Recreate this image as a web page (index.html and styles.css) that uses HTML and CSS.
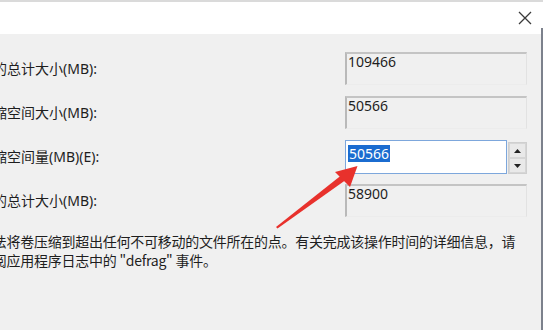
FILE: index.html
```html
<!DOCTYPE html>
<html lang="zh-CN">
<head>
<meta charset="utf-8">
<link rel="stylesheet" href="styles.css">
</head>
<body>
<div class="win">
  <div class="titlebar">
    <svg class="close" width="14" height="14" viewBox="0 0 14 14"><path d="M1 1 L13 13 M13 1 L1 13" stroke="#3a3a3a" stroke-width="1.3" fill="none"/></svg>
  </div>
  <div class="content">
    <div class="row">
      <span class="label">压缩前的总计大小(MB):</span>
      <div class="field"><span class="val">109466</span></div>
    </div>
    <div class="row">
      <span class="label">可用压缩空间大小(MB):</span>
      <div class="field"><span class="val">50566</span></div>
    </div>
    <div class="row">
      <span class="label">输入压缩空间量(MB)(E):</span>
      <div class="spin">
        <div class="edit"><span class="sel">50566</span></div>
        <div class="updown">
          <div class="btn"><svg width="7" height="4" viewBox="0 0 7 4"><path d="M0 4 L3.5 0 L7 4 Z" fill="#222"/></svg></div>
          <div class="btn"><svg width="7" height="4" viewBox="0 0 7 4"><path d="M0 0 L7 0 L3.5 4 Z" fill="#222"/></svg></div>
        </div>
      </div>
    </div>
    <div class="row">
      <span class="label">压缩后的总计大小(MB):</span>
      <div class="field"><span class="val">58900</span></div>
    </div>
    <p class="note"><span class="line">无法将卷压缩到超出任何不可移动的文件所在的点。有关完成该操作时间的详细信息，请</span><span class="line">参阅应用程序日志中的 "defrag" 事件。</span></p>
  </div>
  <svg class="arrow" width="543" height="330" viewBox="0 0 543 330">
    <polygon points="276,227 277.5,228.5 345,180.5 341,175.5" fill="#e8312c"/>
    <polygon points="357.5,166 335,172 350,187" fill="#e8312c"/>
  </svg>
  <div class="edge"></div>
</div>
</body>
</html>
```
FILE: styles.css
```css
* { box-sizing: border-box; }
html, body { margin: 0; padding: 0; }
body {
  width: 543px;
  height: 330px;
  overflow: hidden;
  background: #f0f0f0;
  font-family: "Noto Sans", "Noto Sans CJK SC", sans-serif;
  font-size: 14px;
  color: #1e1e1e;
}
.win {
  position: relative;
  width: 543px;
  height: 330px;
  overflow: hidden;
  background: #f0f0f0;
}
.titlebar {
  height: 34px;
  background: #ffffff;
  border-top: 2px solid #dadada;
  display: flex;
  justify-content: flex-end;
  align-items: center;
  padding-right: 11px;
}
.close { display: block; margin-top: -1px; }
.content {
  padding-top: 18px;
  display: flex;
  flex-direction: column;
  gap: 11px;
}
.row {
  display: flex;
  height: 33px;
}
.label {
  margin-left: -49px;
  width: 394px;
  flex: none;
  white-space: nowrap;
  line-height: 20px;
  padding-top: 7px;
}
.field {
  width: 182px;
  height: 33px;
  border-top: 2px solid #c4c4c4;
  border-left: 2px solid #b9b9b9;
  border-right: 1px solid #e2e2e2;
  border-bottom: 1px solid #ececec;
  padding-left: 1px;
}
.val {
  display: block;
  line-height: 16px;
}
.spin {
  width: 182px;
  height: 34px;
  display: flex;
}
.edit {
  width: 162px;
  height: 34px;
  background: #ffffff;
  border: 1px solid #7da7dc;
  padding: 3px 0 0 2px;
}
.sel {
  background: #1b6cd0;
  color: #ffffff;
  line-height: 17px;
  display: inline-block;
  padding: 0 1px;
}
.updown {
  margin-left: 1px;
  margin-top: 2px;
  width: 19px;
  height: 32px;
  border: 1px solid #cfcfcf;
  background: #e6e6e6;
  display: flex;
  flex-direction: column;
}
.btn {
  flex: 1;
  display: flex;
  align-items: center;
  justify-content: center;
  border: 1px solid #d6d6d6;
  background: #e9e9e9;
}
.note {
  margin: 4px 0 0 -21px;
  font-family: "Noto Sans CJK SC", sans-serif;
  letter-spacing: -0.25px;
  white-space: nowrap;
}
.line {
  display: block;
  height: 19px;
  line-height: 19px;
}
.arrow {
  position: absolute;
  left: 0;
  top: 0;
  pointer-events: none;
}
.edge {
  position: absolute;
  right: 0;
  top: 28px;
  width: 2px;
  bottom: 0;
  background: #7c818c;
}
```
